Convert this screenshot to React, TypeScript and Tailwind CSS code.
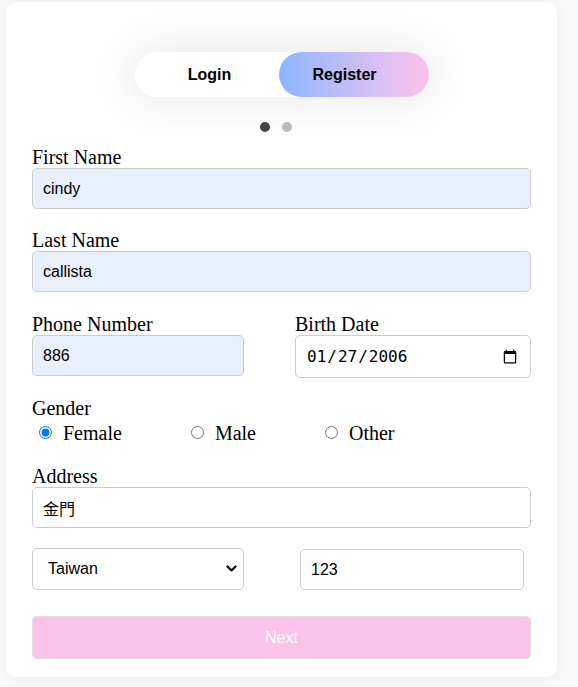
import { useState } from "react";

const labelCls = "block text-[20px] leading-[22px] text-black";
const inputCls =
  "block h-[41px] rounded-[5px] border border-[#cccccc] px-[10px] text-[16px] text-black outline-none";

export default function App() {
  const [tab, setTab] = useState<"login" | "register">("register");
  const [gender, setGender] = useState("female");

  return (
    <div
      className="min-h-screen bg-[#f8f8f9] pl-[6px] pt-[2px]"
      style={{ fontFamily: '"Liberation Serif", "Times New Roman", serif' }}
    >
      <div className="w-[551px] rounded-[10px] bg-white px-[26px] pb-[18px] pt-[50px] shadow-[0_0_12px_rgba(0,0,0,0.04)]">
        {/* tab switch */}
        <div className="flex justify-center">
          <div className="flex h-[45px] w-[294px] rounded-full bg-white font-['Liberation_Sans',Arial,sans-serif] text-[16px] font-bold text-black shadow-[0_0_40px_10px_rgba(0,0,0,0.07)]">
            <button
              onClick={() => setTab("login")}
              className={`w-[144px] rounded-full pl-[6px] ${tab === "login" ? "bg-gradient-to-r from-[#8bb6ff] to-[#fbc2eb]" : ""}`}
            >
              Login
            </button>
            <button
              onClick={() => setTab("register")}
              className={`w-[150px] rounded-full pr-[18px] ${tab === "register" ? "bg-gradient-to-r from-[#8bb6ff] to-[#fbc2eb]" : ""}`}
            >
              Register
            </button>
          </div>
        </div>

        {/* step dots */}
        <div className="mt-[25px] flex justify-center gap-[12px] pr-[12px]">
          <span className="h-[10px] w-[10px] rounded-full bg-[#444444]" />
          <span className="h-[10px] w-[10px] rounded-full bg-[#bbbbbb]" />
        </div>

        <form
          className="mt-[14px] font-['Liberation_Serif','Times_New_Roman',serif]"
          onSubmit={(e) => e.preventDefault()}
        >
          <div>
            <label className={labelCls}>First Name</label>
            <input
              className={`${inputCls} w-full bg-[#e8f0fe] font-['Liberation_Sans',Arial,sans-serif]`}
              defaultValue="cindy"
            />
          </div>

          <div className="mt-[20px]">
            <label className={labelCls}>Last Name</label>
            <input
              className={`${inputCls} w-full bg-[#e8f0fe] font-['Liberation_Sans',Arial,sans-serif]`}
              defaultValue="callista"
            />
          </div>

          <div className="mt-[21px] flex">
            <div className="w-[263px]">
              <label className={labelCls}>Phone Number</label>
              <input
                className={`${inputCls} w-[212px] bg-[#e8f0fe] font-['Liberation_Sans',Arial,sans-serif]`}
                defaultValue="886"
              />
            </div>
            <div className="w-[236px]">
              <label className={labelCls}>Birth Date</label>
              <input
                type="date"
                className={`${inputCls} h-[43px] w-[236px] bg-white font-['DejaVu_Sans_Mono',monospace]`}
                defaultValue="2006-01-27"
              />
            </div>
          </div>

          <div className="mt-[19px]">
            <label className={labelCls}>Gender</label>
            <div className="flex h-[26px] items-end gap-[69px] pl-[7px] text-[20px]">
              {[
                ["female", "Female"],
                ["male", "Male"],
                ["other", "Other"],
              ].map(([v, t]) => (
                <label key={v} className="flex items-center">
                  <input
                    type="radio"
                    name="gender"
                    checked={gender === v}
                    onChange={() => setGender(v)}
                    className="m-0 mr-[11px] h-[13px] w-[13px] -translate-y-[1px]"
                  />
                  <span className="leading-[23px]">{t}</span>
                </label>
              ))}
            </div>
          </div>

          <div className="mt-[20px]">
            <label className={labelCls}>Address</label>
            <input
              className={`${inputCls} w-full bg-white font-['Liberation_Sans',Arial,'Noto_Sans_CJK_TC',sans-serif]`}
              defaultValue="金門"
            />
          </div>

          <div className="mt-[20px] flex items-start">
            <div className="relative w-[212px]">
              <select
                className="h-[42px] w-full appearance-none rounded-[5px] border border-[#cccccc] bg-white pl-[15px] font-['Liberation_Sans',Arial,sans-serif] text-[16px] text-black outline-none"
                defaultValue="Taiwan"
              >
                <option>Taiwan</option>
                <option>Japan</option>
                <option>Korea</option>
              </select>
              <svg
                className="pointer-events-none absolute right-[7px] top-[16px]"
                width="11"
                height="9"
                viewBox="0 0 11 9"
                fill="none"
              >
                <path d="M1.5 2.5 L5.5 6.5 L9.5 2.5" stroke="#111" strokeWidth="2.4" strokeLinecap="round" strokeLinejoin="round" />
              </svg>
            </div>
            <input
              className={`${inputCls} ml-[56px] mt-[1px] w-[224px] bg-white font-['Liberation_Sans',Arial,sans-serif]`}
              defaultValue="123"
            />
          </div>

          <button
            type="submit"
            className="mt-[26px] h-[43px] w-full rounded-[5px] border border-[#e2dde0] bg-[#fbc2eb] font-['Liberation_Sans',Arial,sans-serif] text-[16px] text-white"
          >
            Next
          </button>
        </form>
      </div>
    </div>
  );
}
